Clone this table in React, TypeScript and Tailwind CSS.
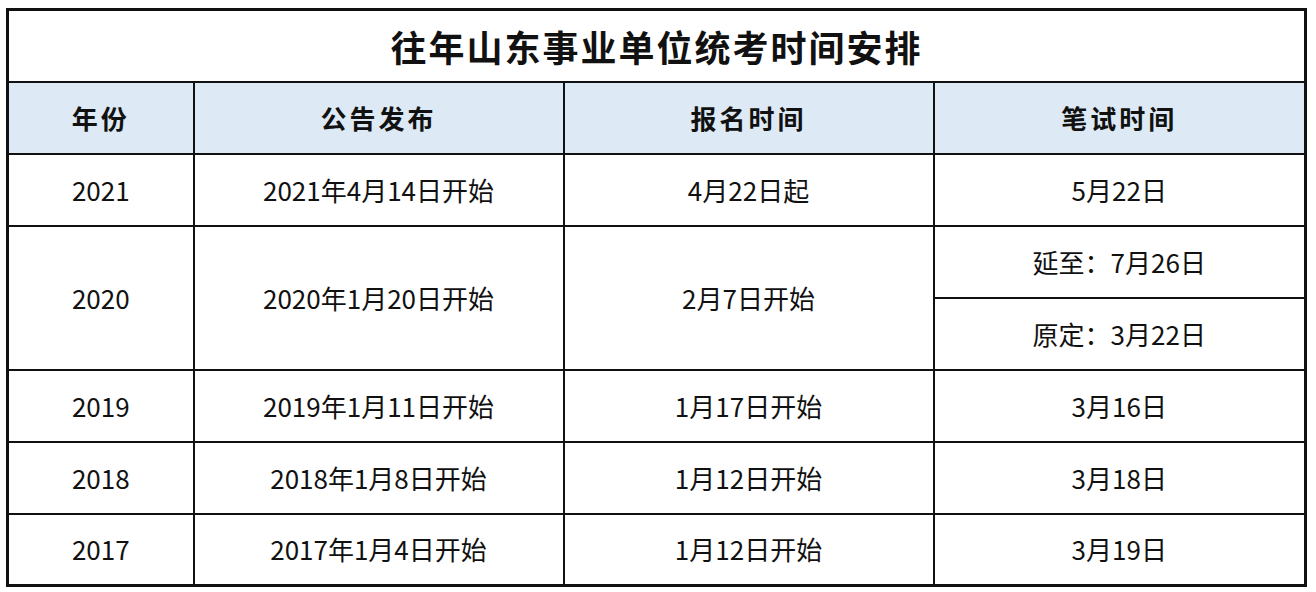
import React from "react";

const font = { fontFamily: '"Noto Sans CJK SC", "Noto Sans", sans-serif' };

const rows: { year: string; notice: string; signup: string; exam: string[] }[] = [
  { year: "2021", notice: "2021年4月14日开始", signup: "4月22日起", exam: ["5月22日"] },
  { year: "2020", notice: "2020年1月20日开始", signup: "2月7日开始", exam: ["延至：7月26日", "原定：3月22日"] },
  { year: "2019", notice: "2019年1月11日开始", signup: "1月17日开始", exam: ["3月16日"] },
  { year: "2018", notice: "2018年1月8日开始", signup: "1月12日开始", exam: ["3月18日"] },
  { year: "2017", notice: "2017年1月4日开始", signup: "1月12日开始", exam: ["3月19日"] },
];

const cell = "border-2 border-[#111] text-center text-[26px] leading-none";

export default function App() {
  return (
    <div className="w-[1316px] h-[592px] bg-white pl-[6px] pt-[8px]" style={font}>
      <table className="table-fixed border-collapse border-[3px] border-[#111] w-[1298px] text-[#111]">
        <colgroup>
          <col className="w-[186px]" />
          <col className="w-[370px]" />
          <col className="w-[370px]" />
          <col className="w-[372px]" />
        </colgroup>
        <tbody>
          <tr className="h-[72px]">
            <td colSpan={4} className="border-2 border-[#111] text-center font-bold text-[36px] tracking-[2px] leading-none">
              往年山东事业单位统考时间安排
            </td>
          </tr>
          <tr className="h-[72px] bg-[#dde9f4]">
            {["年份", "公告发布", "报名时间", "笔试时间"].map((h) => (
              <td key={h} className="border-2 border-[#111] text-center font-bold text-[26px] tracking-[3px] leading-none">
                {h}
              </td>
            ))}
          </tr>
          {rows.map((r) =>
            r.exam.length === 1 ? (
              <tr key={r.year} className="h-[72px]">
                <td className={cell}>{r.year}</td>
                <td className={cell}>{r.notice}</td>
                <td className={cell}>{r.signup}</td>
                <td className={cell}>{r.exam[0]}</td>
              </tr>
            ) : (
              <React.Fragment key={r.year}>
                <tr className="h-[72px]">
                  <td rowSpan={2} className={cell}>{r.year}</td>
                  <td rowSpan={2} className={cell}>{r.notice}</td>
                  <td rowSpan={2} className={cell}>{r.signup}</td>
                  <td className={cell}>{r.exam[0]}</td>
                </tr>
                <tr className="h-[72px]">
                  <td className={cell}>{r.exam[1]}</td>
                </tr>
              </React.Fragment>
            )
          )}
        </tbody>
      </table>
    </div>
  );
}
